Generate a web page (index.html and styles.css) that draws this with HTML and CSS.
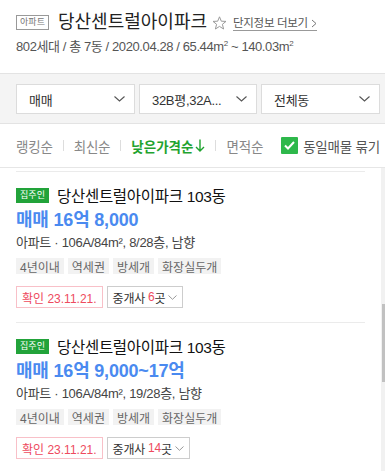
FILE: index.html
```html
<!DOCTYPE html>
<html lang="ko">
<head>
<meta charset="utf-8">
<link rel="stylesheet" href="styles.css">
</head>
<body>
<header class="head">
  <div class="title-row">
    <span class="kind">아파트</span>
    <h1 class="name">당산센트럴아이파크</h1>
    <svg class="star" width="15" height="14" viewBox="0 0 15 14"><path d="M7.5 0.8 L9.3 5.2 L14 5.4 L10.4 8.3 L11.6 13 L7.5 10.4 L3.4 13 L4.6 8.3 L1 5.4 L5.7 5.2 Z" fill="none" stroke="#9a9a9a" stroke-width="1"/></svg>
    <a class="more">단지정보 더보기<svg width="6" height="9" viewBox="0 0 6 9"><path d="M1 1 L5 4.5 L1 8" fill="none" stroke="#777" stroke-width="1"/></svg></a>
  </div>
  <p class="meta">802세대 / 총 7동 / 2020.04.28 / 65.44m<sup>2</sup> ~ 140.03m<sup>2</sup></p>
</header>

<section class="filters">
  <div class="select"><span>매매</span><svg width="11" height="6" viewBox="0 0 11 6"><path d="M0.5 0.5 L5.5 5 L10.5 0.5" fill="none" stroke="#555" stroke-width="1.1"/></svg></div>
  <div class="select"><span>32B평,32A...</span><svg width="11" height="6" viewBox="0 0 11 6"><path d="M0.5 0.5 L5.5 5 L10.5 0.5" fill="none" stroke="#555" stroke-width="1.1"/></svg></div>
  <div class="select"><span>전체동</span><svg width="11" height="6" viewBox="0 0 11 6"><path d="M0.5 0.5 L5.5 5 L10.5 0.5" fill="none" stroke="#555" stroke-width="1.1"/></svg></div>
</section>

<nav class="sort">
  <span class="opt">랭킹순</span><i class="sep"></i>
  <span class="opt">최신순</span><i class="sep"></i>
  <span class="opt on">낮은가격순<svg width="10" height="13" viewBox="0 0 10 13"><path d="M5 0.5 V12 M1 8 L5 12 L9 8" fill="none" stroke="#1fa32f" stroke-width="1.4"/></svg></span><i class="sep"></i>
  <span class="opt">면적순</span>
  <label class="group"><span class="check"><svg width="11" height="9" viewBox="0 0 11 9"><path d="M1 4.5 L4 7.5 L10 1" fill="none" stroke="#fff" stroke-width="2"/></svg></span>동일매물 묶기</label>
</nav>

<div class="listwrap">
  <div class="list">
    <article class="item">
      <div class="item-title"><span class="owner">집주인</span><span class="iname">당산센트럴아이파크 103동</span></div>
      <div class="price">매매 16억 8,000</div>
      <div class="spec">아파트 · 106A/84m², 8/28층, 남향</div>
      <div class="tags"><span>4년이내</span><span>역세권</span><span>방세개</span><span>화장실두개</span></div>
      <div class="btns"><span class="confirm">확인 23.11.21.</span><span class="agent">중개사 <em>6</em>곳<svg width="9" height="5" viewBox="0 0 9 5"><path d="M0.5 0.5 L4.5 4.3 L8.5 0.5" fill="none" stroke="#999" stroke-width="1"/></svg></span></div>
    </article>
    <article class="item">
      <div class="item-title"><span class="owner">집주인</span><span class="iname">당산센트럴아이파크 103동</span></div>
      <div class="price">매매 16억 9,000~17억</div>
      <div class="spec">아파트 · 106A/84m², 19/28층, 남향</div>
      <div class="tags"><span>4년이내</span><span>역세권</span><span>방세개</span><span>화장실두개</span></div>
      <div class="btns"><span class="confirm">확인 23.11.21.</span><span class="agent">중개사 <em>14</em>곳<svg width="9" height="5" viewBox="0 0 9 5"><path d="M0.5 0.5 L4.5 4.3 L8.5 0.5" fill="none" stroke="#999" stroke-width="1"/></svg></span></div>
    </article>
  </div>
  <div class="scrollbar"><div class="thumb"></div></div>
</div>
</body>
</html>
```

FILE: styles.css
```css
* { box-sizing: border-box; }
html, body { margin: 0; padding: 0; }
body {
  width: 385px;
  height: 471px;
  overflow: hidden;
  background: #fff;
  color: #222;
  font-family: "Liberation Sans", "Noto Sans CJK KR", sans-serif;
}

.head { padding: 11px 16px 0; height: 73px; }
.title-row { display: flex; align-items: center; height: 22px; }
.kind {
  display: inline-flex; align-items: center; justify-content: center;
  width: 33px; height: 15px;
  border: 1px solid #999; color: #777;
  font-size: 9px; line-height: 1;
}
.name {
  margin: 0 0 0 9px;
  font-size: 18px; font-weight: normal; color: #222;
  letter-spacing: 0;
  line-height: 22px;
}
.star { margin-left: 5px; margin-top: 1px; }
.more {
  display: inline-flex; align-items: center; gap: 3px;
  margin-left: 6px; margin-top: 3px;
  font-size: 11.5px; color: #555;
  letter-spacing: -0.3px;
  border-bottom: 1px solid #999;
  line-height: 13px;
}
.meta {
  margin: 5px 0 0;
  font-size: 13px; color: #555;
  letter-spacing: -0.4px;
  line-height: 18px;
}
.meta sup { font-size: 8px; vertical-align: 5px; line-height: 0; }

.filters {
  display: flex; gap: 4px;
  height: 51px;
  padding: 10px 5px 0 16px;
  background: #f4f4f4;
  border-top: 1px solid #e3e3e3;
  border-bottom: 1px solid #e3e3e3;
}
.select {
  display: flex; align-items: center; justify-content: space-between;
  width: 119px; height: 30px;
  padding: 0 9px 0 12px;
  background: #fff;
  border: 1px solid #dcdcdc;
  font-size: 13px; color: #333;
  letter-spacing: -0.3px;
}
.select:nth-child(2) { width: 118px; }

.sort {
  display: flex; align-items: center;
  height: 44px;
  padding: 0 0 0 16px;
  border-bottom: 1px solid #e6e6e6;
  font-size: 13.5px; color: #888;
  letter-spacing: -0.2px;
}
.opt { display: inline-flex; align-items: center; gap: 2px; }
.opt.on { color: #1fa32f; font-weight: bold; letter-spacing: 0; }
.sep { display: inline-block; width: 1px; height: 11px; background: #ddd; margin: 0 10px; }
.group {
  display: flex; align-items: center; gap: 5px;
  margin-left: 18px;
  color: #555;
}
.check {
  display: inline-flex; align-items: center; justify-content: center;
  width: 17px; height: 17px;
  background: #2eb84b; border-radius: 1px;
}

.listwrap { display: flex; height: 303px; }
.list { flex: 1; padding: 3px 16px 0; }
.scrollbar { width: 4px; background: #f1f1f1; }
.thumb { margin-top: 136px; height: 78px; background: #c1c1c1; width: 3px; margin-left: 1px; }

.item { border-top: 1px solid #ebebeb; padding: 13px 0 14px; }
.item-title { display: flex; align-items: center; height: 20px; }
.owner {
  display: inline-flex; align-items: center; justify-content: center;
  width: 33px; height: 15px;
  background: #22a33a; color: #fff;
  font-size: 9px; line-height: 1;
}
.iname {
  margin-left: 8px;
  font-size: 15.5px; color: #111;
  letter-spacing: -0.3px;
}
.price {
  margin-top: 3px;
  font-size: 18px; font-weight: bold; color: #4a8af0;
  line-height: 24px;
  letter-spacing: -0.2px;
}
.spec {
  margin-top: 2px;
  font-size: 13px; color: #444;
  line-height: 18px;
  letter-spacing: -0.3px;
}
.tags { display: flex; gap: 4px; margin-top: 6px; }
.tags span {
  display: inline-flex; align-items: center;
  height: 16px; padding: 0 4px;
  background: #f2f2f2; color: #666;
  font-size: 12px;
  letter-spacing: 0;
}
.btns { display: flex; gap: 4px; margin-top: 12px; }
.btns span {
  display: inline-flex; align-items: center;
  height: 22px;
  font-size: 12px;
}
.confirm { padding: 0 5px; border: 1px solid #f8c0c8; color: #ee4a5e; letter-spacing: 0; }
.agent { padding: 0 5px; border: 1px solid #cdcdcd; color: #333; letter-spacing: -0.2px; }
.agent em { font-style: normal; color: #ee4a5e; margin-left: 3px; }
.agent svg { margin-left: 3px; }
```
